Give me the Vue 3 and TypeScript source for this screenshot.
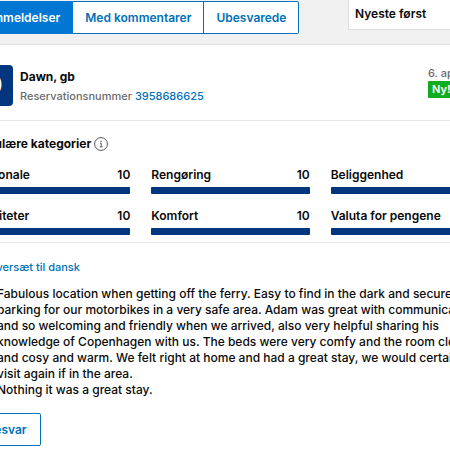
<script setup lang="ts">
import { ref } from 'vue'

interface Category {
  label: string
  score: number
}

const tabs: string[] = ['Anmeldelser', 'Med kommentarer', 'Ubesvarede']
const activeTab = ref<string>('Anmeldelser')
const sortOrder = ref<string>('newest')

const categories: Category[] = [
  { label: 'Personale', score: 10 },
  { label: 'Rengøring', score: 10 },
  { label: 'Beliggenhed', score: 10 },
  { label: 'Faciliteter', score: 10 },
  { label: 'Komfort', score: 10 },
  { label: 'Valuta for pengene', score: 10 },
]

const reviewLines: string[] = [
  'Fabulous location when getting off the ferry. Easy to find in the dark and secure',
  'parking for our motorbikes in a very safe area. Adam was great with communication',
  'and so welcoming and friendly when we arrived, also very helpful sharing his',
  'knowledge of Copenhagen with us. The beds were very comfy and the room clean',
  'and cosy and warm. We felt right at home and had a great stay, we would certainly',
  'visit again if in the area.',
  'Nothing it was a great stay.',
]
</script>

<template>
  <div class="viewport">
    <main class="page">
      <div class="toolbar">
        <nav class="tabs">
          <button
            v-for="tab in tabs"
            :key="tab"
            type="button"
            class="tab"
            :class="{ active: tab === activeTab }"
            @click="activeTab = tab"
          >{{ tab }}</button>
        </nav>
        <select v-model="sortOrder" class="sort" aria-label="Nyeste først">
          <option value="newest">Nyeste først</option>
        </select>
      </div>

      <article class="card">
        <header class="guest">
          <div class="avatar">D</div>
          <div class="who">
            <h2 class="name">Dawn, gb</h2>
            <p class="booking">Reservationsnummer <a href="#">3958686625</a></p>
          </div>
          <div class="date">
            <span>6. april</span>
            <span class="badge">Ny!</span>
          </div>
        </header>

        <section class="categories">
          <h3 class="heading">
            Populære kategorier
            <svg class="info" viewBox="0 0 14 14" aria-hidden="true">
              <circle cx="7" cy="7" r="6.4" />
              <path d="M6 6.2h1.2v3.4M5.8 9.8h2.8" />
              <circle class="dot" cx="7" cy="4.2" r="0.7" />
            </svg>
          </h3>
          <div class="grid">
            <div v-for="c in categories" :key="c.label" class="category">
              <div class="row"><span>{{ c.label }}</span><span>{{ c.score }}</span></div>
              <div class="track"><div class="fill" :style="{ width: c.score * 10 + '%' }"></div></div>
            </div>
          </div>
        </section>

        <section class="review">
          <a href="#" class="translate">Oversæt til dansk</a>
          <p class="text">
            <span v-for="line in reviewLines" :key="line" class="line">{{ line }}</span>
          </p>
          <button type="button" class="reply">Besvar</button>
        </section>
      </article>
    </main>
  </div>
</template>

<style>
body {
  background: #fff;
}
</style>

<style scoped>
.viewport {
  overflow: hidden;
  font-family: Inter, 'Liberation Sans', sans-serif;
  font-size: 12px;
  font-weight: 600;
  line-height: 16px;
  color: #0a0a0a;
}
.page {
  width: calc(100% + 83px);
  margin-left: -44px;
}
.toolbar {
  display: flex;
  justify-content: space-between;
  align-items: flex-start;
  padding: 0 0 10px 16px;
  background: #f1f1f1;
}
.tabs {
  display: flex;
  margin-top: 1px;
}
button,
.sort {
  font: inherit;
  box-sizing: border-box;
}
.tab {
  height: 33px;
  padding: 0 12px;
  border: 1px solid #0071b8;
  border-left-width: 0;
  background: #fff;
  color: #0071b8;
  white-space: nowrap;
}
.tab:last-child {
  border-radius: 0 2px 2px 0;
}
.tab.active {
  padding: 0 12px 0 15px;
  border-color: #0077d2;
  background: #0077d2;
  color: #fff;
}
.sort {
  width: 141px;
  height: 30px;
  padding: 0 6px 2px;
  border: 1px solid #ddd;
  border-top: 0;
  border-radius: 0;
  background: #fff;
  color: #0a0a0a;
  appearance: none;
}
.card {
  border-top: 1px solid #e2e2e2;
  background: #fff;
}
.guest {
  display: flex;
  padding: 20px 0 14px 16px;
  border-bottom: 1px solid #e6e6e6;
}
.avatar {
  width: 41px;
  height: 41px;
  border-radius: 4px;
  background: #003580;
  color: #fff;
  font-size: 28px;
  line-height: 41px;
  text-align: center;
}
.who {
  flex: 1;
  padding: 4px 7px 0;
}
.name {
  margin: 0;
  font-size: 12px;
  font-weight: 700;
}
.booking {
  margin: 3px 0 0;
  font-size: 11px;
  font-weight: 500;
  color: #6b6b6b;
}
a {
  color: #0071b8;
  text-decoration: none;
}
.date {
  display: flex;
  flex-direction: column;
  align-items: flex-start;
  width: 61px;
  font-size: 11px;
  font-weight: 500;
  color: #6b6b6b;
}
.badge {
  padding: 0 4px;
  border-radius: 1px;
  background: #11ad20;
  color: #fff;
  font-weight: 600;
  line-height: 17px;
}
.categories {
  padding: 15px 0 7px 16px;
  border-bottom: 1px solid #e6e6e6;
}
.heading {
  display: flex;
  align-items: center;
  gap: 3px;
  margin: 0 0 15px;
  font-size: 12px;
  font-weight: 700;
}
.info {
  width: 14px;
  height: 14px;
  fill: none;
  stroke: #444;
  stroke-width: 0.9;
}
.info .dot {
  fill: #444;
  stroke: none;
}
.grid {
  display: grid;
  grid-template-columns: repeat(3, 1fr);
  gap: 14px 21px;
}
.row {
  display: flex;
  justify-content: space-between;
  margin-bottom: 4px;
}
.track {
  height: 7px;
  border-radius: 1px;
  background: #e6e6e6;
}
.fill {
  height: 100%;
  border-radius: 1px;
  background: #003580;
}
.review {
  padding: 16px 0 4px 16px;
}
.translate {
  display: block;
  padding-left: 16px;
  font-size: 11px;
  font-weight: 500;
}
.text {
  margin: 11px 0 15px;
  padding-left: 25px;
  font-weight: 500;
}
.line {
  display: block;
  white-space: nowrap;
}
.reply {
  width: 69px;
  height: 33px;
  padding: 0;
  border: 1px solid #0071b8;
  border-radius: 2px;
  background: #fff;
  color: #0071b8;
}
</style>
